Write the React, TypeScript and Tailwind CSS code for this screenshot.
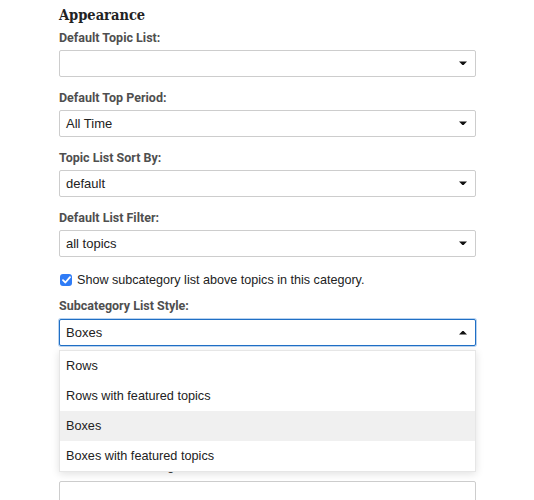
import React from "react";

const sans = { fontFamily: "'Liberation Sans', Arial, sans-serif" };

function Caret({ up = false }: { up?: boolean }) {
  return (
    <svg width="8" height="5" viewBox="0 0 8 5" className="shrink-0">
      <path d={up ? "M0 4.5 L1 3.5 L3.4 1 L4.6 1 L7 3.5 L8 4.5 Z" : "M0 0.5 L1 1.5 L3.4 4 L4.6 4 L7 1.5 L8 0.5 Z"} fill="#111" />
    </svg>
  );
}

function FieldLabel({ children }: { children: React.ReactNode }) {
  return (
    <div
      className="h-[18px] text-[12.5px] leading-[18px] font-bold text-[#4f4f4f]"
      style={{ fontFamily: "Roboto, 'Liberation Sans', sans-serif" }}
    >
      {children}
    </div>
  );
}

function SelectBox({ value, open = false }: { value?: string; open?: boolean }) {
  return (
    <div
      className={
        "flex h-[27px] items-center justify-between rounded-[2px] border bg-white pl-[6px] pr-[8px] text-[13px] text-[#222] " +
        (open ? "border-[#1f6fc5] shadow-[0_0_0_1px_#b9d3f0]" : "border-[#cdcdcd]")
      }
      style={sans}
    >
      <span>{value ?? ""}</span>
      <Caret up={open} />
    </div>
  );
}

function Field({ label, value, className = "" }: { label: string; value?: string; className?: string }) {
  return (
    <div className={"flex flex-col gap-[3px] " + className}>
      <FieldLabel>{label}</FieldLabel>
      <SelectBox value={value} />
    </div>
  );
}

function CheckBox({ checked }: { checked: boolean }) {
  return checked ? (
    <span className="flex h-[12px] w-[12px] shrink-0 items-center justify-center rounded-[3px] bg-[#2f7cf6]">
      <svg width="9" height="8" viewBox="0 0 9 8">
        <path d="M1 4.2 L3.4 6.5 L8 1.2" stroke="#fff" strokeWidth="1.8" fill="none" strokeLinecap="round" strokeLinejoin="round" />
      </svg>
    </span>
  ) : (
    <span className="h-[12px] w-[12px] shrink-0 rounded-[3px] border border-[#8d8d8d] bg-white" />
  );
}

const options = ["Rows", "Rows with featured topics", "Boxes", "Boxes with featured topics"];

export default function App() {
  return (
    <div className="min-h-[500px] w-[534px] overflow-hidden bg-white pl-[59px] pr-[58px]">
      <h2
        className="pt-[5px] text-[14.5px] leading-[20px] font-bold text-[#222]"
        style={{ fontFamily: "'DejaVu Serif Condensed', 'DejaVu Serif', serif", fontStretch: "condensed" }}
      >
        Appearance
      </h2>

      <Field label="Default Topic List:" className="mt-[4px]" />
      <Field label="Default Top Period:" value="All Time" className="mt-[12px]" />
      <Field label="Topic List Sort By:" value="default" className="mt-[12px]" />
      <Field label="Default List Filter:" value="all topics" className="mt-[12px]" />

      <label className="mt-[16px] flex h-[14px] items-center gap-[5px] pl-[1px] text-[12.6px] text-[#222]" style={sans}>
        <CheckBox checked />
        <span>Show subcategory list above topics in this category.</span>
      </label>

      <div className="relative mt-[10px]">
        <div className="flex flex-col gap-[4px]">
          <FieldLabel>Subcategory List Style:</FieldLabel>
          <SelectBox value="Boxes" open />
        </div>

        {/* open option list */}
        <ul
          className="absolute left-0 right-0 top-[53px] z-10 border border-[#e6e6e6] bg-white shadow-[0_2px_8px_rgba(0,0,0,0.12)] text-[12.7px] text-[#222]"
          style={sans}
        >
          {options.map((o) => (
            <li
              key={o}
              className={"flex h-[30px] items-center pl-[6px] pt-px " + (o === "Boxes" ? "bg-[#f0f0f0]" : "")}
            >
              {o}
            </li>
          ))}
        </ul>

        {/* settings underneath the open list */}
        <div className="h-[113px]" />
        <label className="flex h-[14px] items-center gap-[5px] pl-[1px] text-[12.6px] text-[#222]" style={sans}>
          <CheckBox checked={false} />
          <span>Custom incoming email address:</span>
        </label>
        <div className="mt-[8px] h-[27px] rounded-[2px] border border-[#cdcdcd] bg-white" />
      </div>
    </div>
  );
}
